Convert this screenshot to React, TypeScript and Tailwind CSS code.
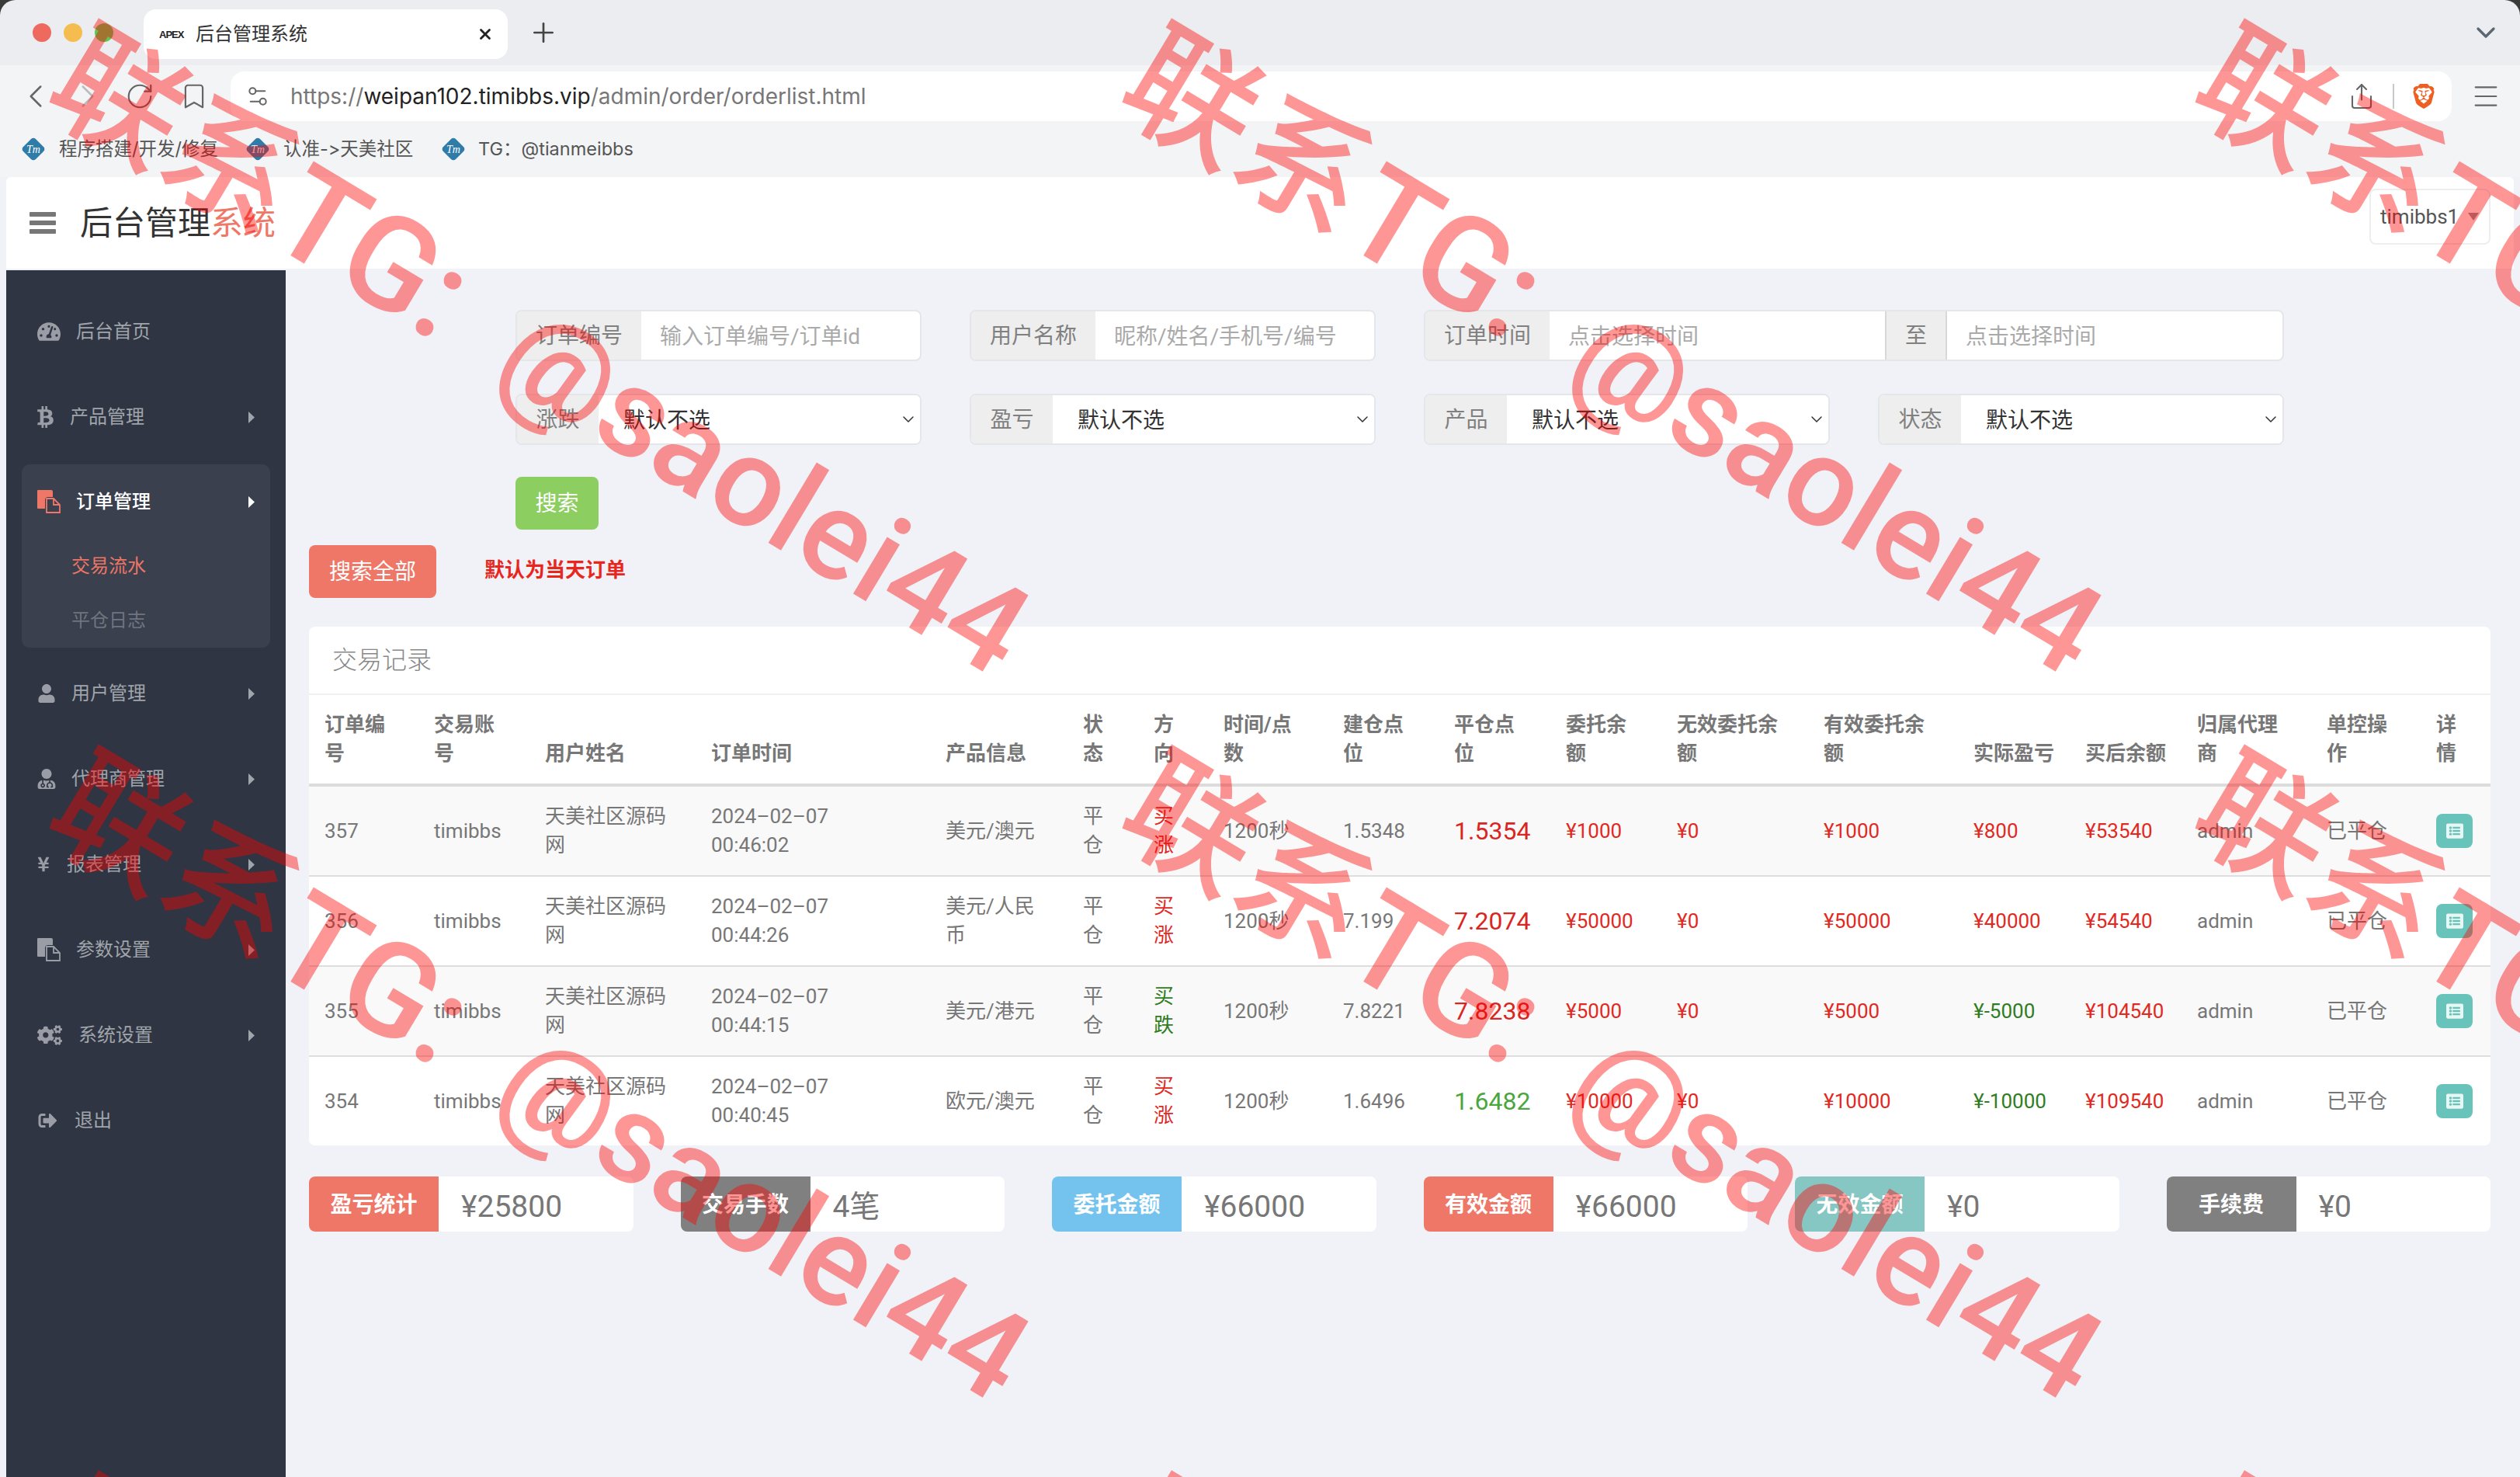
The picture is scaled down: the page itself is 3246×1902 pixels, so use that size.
import { Bookmark, ChevronDown, ChevronLeft, ChevronRight, Menu, Plus, RotateCw, Settings2, Share, X } from 'lucide-react';
import { FaBtc, FaCogs, FaListAlt, FaSignOutAlt, FaTachometerAlt, FaUser, FaUserMd, FaYenSign } from 'react-icons/fa';
import { SiBrave } from 'react-icons/si';
import type { ReactNode } from 'react';

function FilesIcon({ className }: { className: string }) {
  return (
    <svg viewBox="0 0 30 30" className={className} fill="currentColor">
      <path d="M1 0h17a2 2 0 0 1 2 2v7h-6a4 4 0 0 0-4 4v11H1a1 1 0 0 1-1-1V1a1 1 0 0 1 1-1z" />
      <path d="M12 11h9l8 8v10H12zM21 11v8h8" fill="none" stroke="currentColor" strokeWidth="1.8" />
    </svg>
  );
}

function Tm() {
  return (
    <svg viewBox="0 0 30 30" className="w-[30px] h-[30px] shrink-0">
      <path d="M12 2a4 4 0 0 1 6 0l10 10a4 4 0 0 1 0 6L18 28a4 4 0 0 1-6 0L2 18a4 4 0 0 1 0-6z" fill="#2f7ca8" />
      <text x="15" y="20" textAnchor="middle" fontSize="14" fontStyle="italic" fontFamily="Liberation Serif" fill="#fff">Tm</text>
    </svg>
  );
}

function Arrow({ tone }: { tone: string }) {
  return (
    <svg viewBox="0 0 8 15" className={`w-[8px] h-[15px] ml-auto ${tone}`} fill="currentColor">
      <path d="M0 0l8 7.5L0 15z" />
    </svg>
  );
}

const menuTop: { icon: ReactNode; label: string; cell: string; arrow?: boolean }[] = [
  { icon: <FaTachometerAlt className="w-[30px] h-[30px]" />, label: '后台首页', cell: 'w-[50px]' },
  { icon: <FaBtc className="w-[21px] h-[30px]" />, label: '产品管理', cell: 'w-[42px]', arrow: true },
];

const menuRest: { icon: ReactNode; label: string; cell: string; arrow?: boolean }[] = [
  { icon: <FaUser className="w-[24px] h-[24px]" />, label: '用户管理', cell: 'w-[44px]', arrow: true },
  { icon: <FaUserMd className="w-[24px] h-[26px]" />, label: '代理商管理', cell: 'w-[44px]', arrow: true },
  { icon: <FaYenSign className="w-[16px] h-[24px]" />, label: '报表管理', cell: 'w-[38px]', arrow: true },
  { icon: <FilesIcon className="w-[30px] h-[30px]" />, label: '参数设置', cell: 'w-[50px]', arrow: true },
  { icon: <FaCogs className="w-[32px] h-[30px]" />, label: '系统设置', cell: 'w-[53px]', arrow: true },
  { icon: <FaSignOutAlt className="w-[27px] h-[24px]" />, label: '退出', cell: 'w-[48px]' },
];

function SideItem({ item }: { item: (typeof menuTop)[number] }) {
  return (
    <div className="h-[110px] flex items-center pl-[40px] pr-[40px] text-[24px] text-[#a0a4ab]">
      <div className={`${item.cell} shrink-0 flex items-center text-[#9a9da5]`}>{item.icon}</div>
      <span>{item.label}</span>
      {item.arrow && <Arrow tone="text-[#a0a4ab]" />}
    </div>
  );
}

function Sidebar() {
  return (
    <aside className="w-[360px] shrink-0 bg-[#2f3542] pt-[24px]">
      {menuTop.map(item => <SideItem key={item.label} item={item} />)}
      <div className="mx-[20px] mt-[6px] mb-[4px] bg-[#3a404d] rounded-[10px]">
        <div className="h-[96px] flex items-center pl-[20px] pr-[20px] text-[24px] font-medium text-white">
          <div className="w-[50px] shrink-0 text-[#ee7768]"><FilesIcon className="w-[30px] h-[30px]" /></div>
          <span>订单管理</span>
          <Arrow tone="text-white" />
        </div>
        <div className="h-[70px] flex items-center pl-[64px] text-[24px] text-[#ec7565]">交易流水</div>
        <div className="h-[70px] flex items-center pl-[64px] text-[24px] text-[#70757f]">平仓日志</div>
      </div>
      {menuRest.map(item => <SideItem key={item.label} item={item} />)}
    </aside>
  );
}

function Group({ label, labelW, children, className = '' }: { label: string; labelW: string; children: ReactNode; className?: string }) {
  return (
    <div className={`h-[66px] flex bg-white border-2 border-[#e4e6ea] rounded-[8px] overflow-hidden ${className}`}>
      <div className={`${labelW} shrink-0 bg-[#eeeeee] pt-[2px] flex items-center justify-center text-[28px] text-[#808080]`}>{label}</div>
      {children}
    </div>
  );
}

function TextField({ placeholder }: { placeholder: string }) {
  return (
    <input
      placeholder={placeholder}
      className="flex-1 min-w-0 pl-[24px] pt-[3px] text-[28px] outline-none placeholder:text-[#aaaaaa]"
    />
  );
}

function SelectField() {
  return (
    <div className="flex-1 relative min-w-0">
      <select className="w-full h-full appearance-none pl-[32px] pt-[3px] text-[28px] text-[#333] outline-none bg-white">
        <option>默认不选</option>
      </select>
      <ChevronDown className="absolute right-[3px] top-[19px] w-[24px] h-[24px] text-[#333] pointer-events-none" strokeWidth={1.5} />
    </div>
  );
}

function SearchForm() {
  return (
    <div className="ml-[266px] w-[2278px] grid grid-cols-4 gap-x-[62px] gap-y-[42px]">
      <Group label="订单编号" labelW="w-[160px]"><TextField placeholder="输入订单编号/订单id" /></Group>
      <Group label="用户名称" labelW="w-[160px]"><TextField placeholder="昵称/姓名/手机号/编号" /></Group>
      <Group label="订单时间" labelW="w-[160px]" className="col-span-2">
        <TextField placeholder="点击选择时间" />
        <div className="w-[80px] shrink-0 bg-[#eeeeee] pt-[2px] border-x-2 border-[#d8d8d8] flex items-center justify-center text-[28px] text-[#808080]">至</div>
        <TextField placeholder="点击选择时间" />
      </Group>
      <Group label="涨跌" labelW="w-[105px]"><SelectField /></Group>
      <Group label="盈亏" labelW="w-[105px]"><SelectField /></Group>
      <Group label="产品" labelW="w-[105px]"><SelectField /></Group>
      <Group label="状态" labelW="w-[105px]"><SelectField /></Group>
    </div>
  );
}

const R = 'text-[#e2291f]';
const G = 'text-[#2f7d1f]';

const heads = ['订单编号', '交易账号', '用户姓名', '订单时间', '产品信息', '状态', '方向', '时间/点\n数', '建仓点位', '平仓点\n位', '委托余额', '无效委托余额', '有效委托余额', '实际盈亏', '买后余额', '归属代理商', '单控操作', '详情'];

const rows = [
  { id: '357', date: '2024–02–07', time: '00:46:02', prod: '美元/澳元', dir: '买涨', dirC: R, open: '1.5348', close: '1.5354', closeC: 'text-[#d9261f]', amt: '¥1000', pnl: '¥800', pnlC: R, bal: '¥53540' },
  { id: '356', date: '2024–02–07', time: '00:44:26', prod: '美元/人民币', dir: '买涨', dirC: R, open: '7.199', close: '7.2074', closeC: 'text-[#d9261f]', amt: '¥50000', pnl: '¥40000', pnlC: R, bal: '¥54540' },
  { id: '355', date: '2024–02–07', time: '00:44:15', prod: '美元/港元', dir: '买跌', dirC: G, open: '7.8221', close: '7.8238', closeC: 'text-[#d9261f]', amt: '¥5000', pnl: '¥-5000', pnlC: G, bal: '¥104540' },
  { id: '354', date: '2024–02–07', time: '00:40:45', prod: '欧元/澳元', dir: '买涨', dirC: R, open: '1.6496', close: '1.6482', closeC: 'text-[#4aa63d]', amt: '¥10000', pnl: '¥-10000', pnlC: G, bal: '¥109540' },
];

function OrderTable() {
  const td = 'px-[20px] py-[20px] align-middle';
  return (
    <div className="mt-[37px] mr-[30px] bg-white rounded-[8px] overflow-hidden">
      <div className="h-[88px] flex items-center pl-[30px] text-[32px] font-light text-[#888] border-b-2 border-[#f0f0f0]">交易记录</div>
      <table className="w-full table-fixed text-[26px] leading-[37px] text-[#777]">
        <colgroup>
          <col className="w-[141px]" /><col className="w-[143px]" /><col className="w-[214px]" /><col className="w-[302px]" /><col className="w-[177px]" />
          <col className="w-[91px]" /><col className="w-[90px]" /><col className="w-[154px]" /><col className="w-[143px]" /><col className="w-[144px]" />
          <col className="w-[143px]" /><col className="w-[189px]" /><col className="w-[193px]" /><col className="w-[144px]" /><col className="w-[144px]" />
          <col className="w-[167px]" /><col className="w-[141px]" /><col className="w-[91px]" />
        </colgroup>
        <thead>
          <tr className="border-b-4 border-[#dcdcdc]">
            {heads.map(h => <th key={h} className="px-[20px] py-[20px] align-bottom text-left font-bold whitespace-pre-line">{h}</th>)}
          </tr>
        </thead>
        <tbody>
          {rows.map((r, i) => (
            <tr key={r.id} className={`${i % 2 === 0 ? 'bg-[#f9f9f9]' : 'bg-white'} ${i < 3 ? 'border-b-2 border-[#dedede]' : ''}`}>
              <td className={td}>{r.id}</td>
              <td className={td}>timibbs</td>
              <td className={td}>天美社区源码网</td>
              <td className={td}>{r.date}<br />{r.time}</td>
              <td className={td}>{r.prod}</td>
              <td className={td}>平仓</td>
              <td className={`${td} ${r.dirC}`}>{r.dir}</td>
              <td className={td}>1200秒</td>
              <td className={td}>{r.open}</td>
              <td className={`${td} text-[32px] ${r.closeC}`}>{r.close}</td>
              <td className={`${td} ${R}`}>{r.amt}</td>
              <td className={`${td} ${R}`}>¥0</td>
              <td className={`${td} ${R}`}>{r.amt}</td>
              <td className={`${td} ${r.pnlC}`}>{r.pnl}</td>
              <td className={`${td} ${R}`}>{r.bal}</td>
              <td className={td}>admin</td>
              <td className={td}>已平仓</td>
              <td className={td}>
                <button className="w-[47px] h-[44px] rounded-[8px] bg-[#68c4ba] flex items-center justify-center">
                  <FaListAlt className="w-[22px] h-[22px] text-[#e8f6f4]" />
                </button>
              </td>
            </tr>
          ))}
        </tbody>
      </table>
    </div>
  );
}

const stats = [
  { label: '盈亏统计', value: '¥25800', bg: 'bg-[#ee7768]' },
  { label: '交易手数', value: '4笔', bg: 'bg-[#808080]' },
  { label: '委托金额', value: '¥66000', bg: 'bg-[#74c3ef]' },
  { label: '有效金额', value: '¥66000', bg: 'bg-[#ee7768]' },
  { label: '无效金额', value: '¥0', bg: 'bg-[#86c7c4]' },
  { label: '手续费', value: '¥0', bg: 'bg-[#808080]' },
];

function StatRow() {
  return (
    <div className="mt-[40px] mr-[30px] grid grid-cols-6 gap-x-[61px]">
      {stats.map(s => (
        <div key={s.label} className="h-[71px] flex bg-white rounded-[8px] overflow-hidden">
          <div className={`${s.bg} w-[167px] shrink-0 pt-[2px] flex items-center justify-center text-[28px] font-bold text-white`}>{s.label}</div>
          <div className="pl-[29px] pt-[8px] flex items-center text-[39px] text-[#777]">{s.value}</div>
        </div>
      ))}
    </div>
  );
}

function Watermarks() {
  const marks = [];
  for (let r = 0; r < 3; r++) {
    for (let c = 0; c < 3; c++) {
      marks.push(
        <div
          key={`${r}-${c}`}
          className="absolute origin-[0_50%] rotate-[31deg] whitespace-nowrap text-[168px] leading-[168px] font-medium text-[rgba(255,0,0,0.41)] font-['Roboto','Noto_Sans_CJK_SC',sans-serif]"
          style={{ left: 80 + c * 1382, top: 2 + r * 935 }}
        >
          联系TG: <span className="ml-[42px] text-[161px]">@saolei44</span>
        </div>
      );
    }
  }
  return <div className="absolute inset-0 overflow-hidden pointer-events-none z-50">{marks}</div>;
}

function BrowserChrome() {
  return (
    <>
      <div className="h-[84px] bg-[#ebedf0] flex items-center pl-[42px] pr-[24px]">
        <div className="w-[24px] h-[24px] rounded-full bg-[#ee6a5f]" />
        <div className="w-[24px] h-[24px] rounded-full bg-[#f5bd4f] ml-[16px]" />
        <div className="w-[24px] h-[24px] rounded-full bg-[#62c554] ml-[16px]" />
        <div className="ml-[39px] w-[469px] h-[64px] self-end mb-[8px] bg-white rounded-[16px] flex items-center pl-[20px] pr-[18px]">
          <span className="w-[30px] text-[13px] leading-none font-black tracking-[-1px] text-[#222] font-['Liberation_Sans']">APEX</span>
          <span className="ml-[17px] text-[24px] text-[#333]">后台管理系统</span>
          <X className="ml-auto w-[22px] h-[22px] text-[#222]" strokeWidth={3} />
        </div>
        <Plus className="ml-[26px] w-[40px] h-[40px] text-[#444]" strokeWidth={1.6} />
        <ChevronDown className="ml-auto w-[40px] h-[40px] text-[#5b6670]" strokeWidth={2} />
      </div>
      <div className="h-[80px] bg-[#f3f4f6] flex items-center pl-[21px]">
        <ChevronLeft className="w-[50px] h-[50px] text-[#666]" strokeWidth={1.2} />
        <ChevronRight className="ml-[17px] w-[50px] h-[50px] text-[#bbb]" strokeWidth={1.2} />
        <RotateCw className="ml-[23px] w-[38px] h-[38px] text-[#666]" strokeWidth={1.4} />
        <Bookmark className="ml-[32px] w-[38px] h-[38px] text-[#666]" strokeWidth={1.4} />
        <div className="ml-[28px] w-[2861px] h-[64px] bg-white rounded-[18px] flex items-center pl-[19px] pr-[20px]">
          <Settings2 className="w-[32px] h-[32px] text-[#666]" strokeWidth={1.5} />
          <span className="ml-[26px] text-[28px] text-[#777] font-['Inter','Noto_Sans_CJK_SC',sans-serif]">
            https://<span className="text-[#222]">weipan102.timibbs.vip</span>/admin/order/orderlist.html
          </span>
          <Share className="ml-auto w-[36px] h-[36px] text-[#666]" strokeWidth={1.4} />
          <div className="ml-[22px] w-[2px] h-[32px] bg-[#c8c8c8]" />
          <SiBrave className="ml-[22px] w-[32px] h-[36px] text-[#ef5f21]" />
        </div>
        <Menu className="ml-[24px] w-[40px] h-[40px] text-[#666]" strokeWidth={1.3} />
      </div>
      <div className="h-[64px] pb-[8px] bg-[#f3f4f6] flex items-center pl-[28px] text-[23.5px] text-[#555] [font-feature-settings:'calt'_0] font-['Inter','Noto_Sans_CJK_SC',sans-serif]">
        <Tm /><span className="ml-[18px] w-[241px]">程序搭建/开发/修复</span>
        <Tm /><span className="ml-[18px] w-[204px]">认准-&gt;天美社区</span>
        <Tm /><span className="ml-[17px]">TG：@tianmeibbs</span>
      </div>
    </>
  );
}

export default function App() {
  return (
    <div className="relative w-[3246px] h-[1902px] overflow-hidden bg-[#3a3a3a] font-['Roboto','Noto_Sans_CJK_SC',sans-serif]">
      <div className="h-full flex flex-col rounded-t-[20px] overflow-hidden">
        <BrowserChrome />
        <div className="flex-1 min-h-0 flex flex-col bg-[#f0f2f7] pl-[8px] pr-[8px]">
          <header className="h-[118px] shrink-0 mb-[2px] bg-white rounded-t-[6px] flex items-center pl-[30px] pr-[30px]">
            <div className="flex flex-col gap-[5px]">
              <div className="w-[34px] h-[6px] rounded-[1px] bg-[#777]" />
              <div className="w-[34px] h-[6px] rounded-[1px] bg-[#777]" />
              <div className="w-[34px] h-[6px] rounded-[1px] bg-[#777]" />
            </div>
            <div className="ml-[31px] text-[42px] text-[#333]">后台管理<span className="text-[#ee7768]">系统</span></div>
            <div className="ml-auto mb-[16px] w-[156px] h-[72px] border-2 border-[#eeeeee] rounded-[8px] flex items-center pl-[12px] text-[26px] text-[#555]">
              timibbs1
              <svg viewBox="0 0 14 10" className="ml-[12px] w-[14px] h-[10px] text-[#8f979f]" fill="currentColor"><path d="M0 0h14L7 10z" /></svg>
            </div>
          </header>
          <div className="flex-1 min-h-0 flex">
            <Sidebar />
            <main className="flex-1 min-w-0 pl-[30px] pt-[51px]">
              <SearchForm />
              <button className="block ml-[266px] mt-[41px] pt-[2px] w-[107px] h-[68px] rounded-[8px] bg-[#8cce60] text-[28px] text-white">搜索</button>
              <div className="mt-[20px] flex items-center">
                <button className="w-[164px] h-[68px] pt-[2px] rounded-[8px] bg-[#ee7768] text-[28px] text-white">搜索全部</button>
                <span className="ml-[62px] -mt-[4px] text-[26px] font-bold text-[#e8261e]">默认为当天订单</span>
              </div>
              <OrderTable />
              <StatRow />
            </main>
          </div>
        </div>
      </div>
      <Watermarks />
    </div>
  );
}
